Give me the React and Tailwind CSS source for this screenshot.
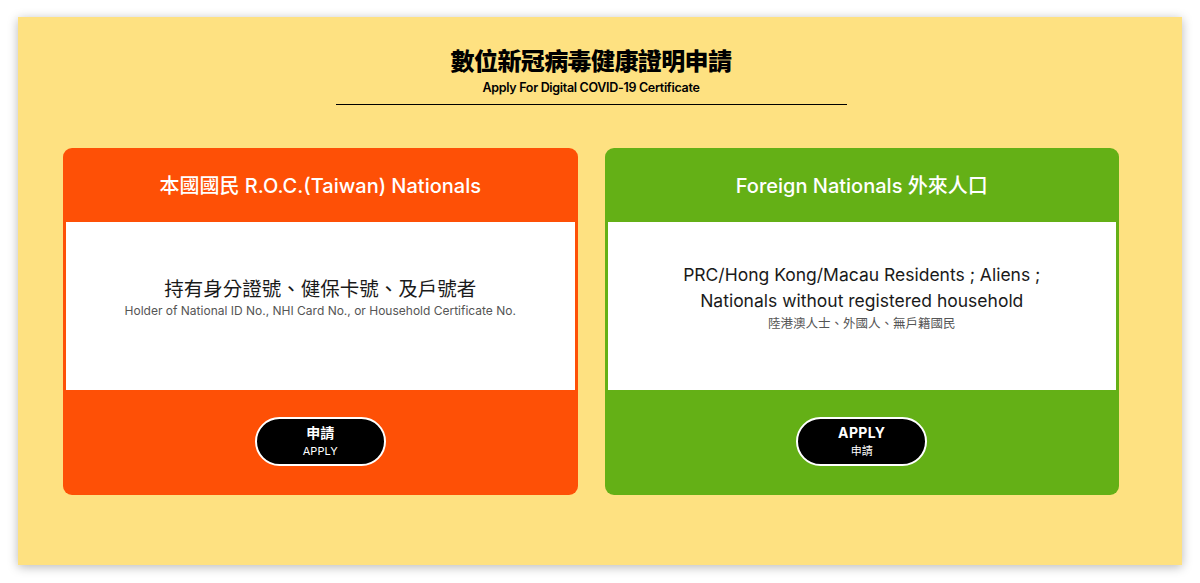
const cjk = { fontFamily: 'Inter, "Noto Sans CJK TC", sans-serif' };

const ApplyButton = ({ top, bottom, topZh }) => (
  <button
    type="button"
    className="w-[131px] h-[49px] rounded-full bg-black border-2 border-white text-white flex flex-col items-center justify-center leading-none"
  >
    <span className={topZh ? 'text-[14px] font-bold' : 'text-[14px] font-bold tracking-wide'}>{top}</span>
    <span className="text-[11px] mt-[6px]">{bottom}</span>
  </button>
);

const Card = ({ color, title, children, button }) => (
  <div className={`w-[515px] h-[347px] rounded-[9px] flex flex-col overflow-hidden ${color}`}>
    <div className="h-[74px] flex items-center justify-center text-white text-[20px] font-medium pt-[2px]">
      {title}
    </div>
    <div className="mx-[3px] h-[168px] bg-white flex flex-col items-center justify-center pb-[16px] text-center">
      {children}
    </div>
    <div className="flex-1 flex items-center justify-center pb-[2px]">{button}</div>
  </div>
);

export default function App() {
  return (
    <div className="min-h-screen w-[1200px] h-[583px] bg-white pt-[17px] pl-[18px]" style={cjk}>
      <div className="w-[1164px] h-[548px] bg-[#fee181] shadow-[0_2px_10px_rgba(0,0,0,0.28)] pl-[45px] pr-[63px] pt-[30px]">
        {/* Header */}
        <div className="flex flex-col items-center">
          <h1 className="text-[24px] font-black leading-[30px] text-black tracking-tight">數位新冠病毒健康證明申請</h1>
          <p className="text-[12.5px] font-semibold text-black mt-[2px] tracking-tight">Apply For Digital COVID-19 Certificate</p>
          <div className="w-[511px] h-px bg-black mt-[6px]"></div>
        </div>

        {/* Cards */}
        <div className="flex gap-[27px] mt-[43px]">
          <Card
            color="bg-[#fe5006]"
            title="本國國民 R.O.C.(Taiwan) Nationals"
            button={<ApplyButton top="申請" bottom="APPLY" topZh />}
          >
            <p className="text-[19.5px] text-[#1a1a1a] leading-[26px]">持有身分證號、健保卡號、及戶號者</p>
            <p className="text-[12px] text-[#555]">Holder of National ID No., NHI Card No., or Household Certificate No.</p>
          </Card>
          <Card
            color="bg-[#64b016]"
            title="Foreign Nationals 外來人口"
            button={<ApplyButton top="APPLY" bottom="申請" />}
          >
            <p className="text-[17.5px] text-[#1a1a1a] leading-[26px]">PRC/Hong Kong/Macau Residents ; Aliens ;</p>
            <p className="text-[17.5px] text-[#1a1a1a] leading-[26px]">Nationals without registered household</p>
            <p className="text-[12.5px] text-[#555] mt-[1px]">陸港澳人士、外國人、無戶籍國民</p>
          </Card>
        </div>
      </div>
    </div>
  );
}
